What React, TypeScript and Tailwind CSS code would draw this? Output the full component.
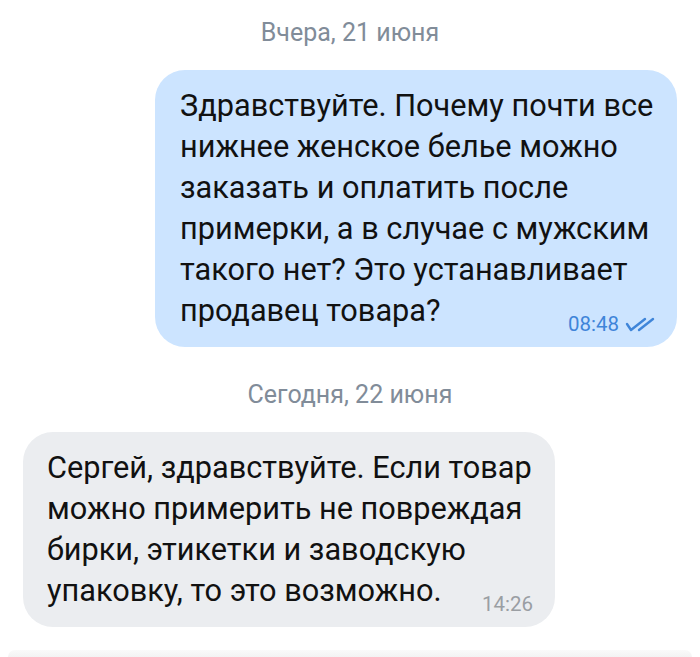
import React from "react";

const font = { fontFamily: "Roboto, 'Noto Sans', sans-serif" };

function DoubleCheck() {
  return (
    <svg width="30" height="16" viewBox="0 0 30 16" fill="none" className="shrink-0">
      <path d="M2 8 L6 14 L20 3" stroke="#3f85d9" strokeWidth="2.4" strokeLinecap="round" strokeLinejoin="round" />
      <path d="M14 14 L28 3" stroke="#3f85d9" strokeWidth="2.4" strokeLinecap="round" strokeLinejoin="round" />
    </svg>
  );
}

export default function App() {
  const outLines = [
    "Здравствуйте. Почему почти все",
    "нижнее женское белье можно",
    "заказать и оплатить после",
    "примерки, а в случае с мужским",
    "такого нет? Это устанавливает",
  ];
  const inLines = [
    "Сергей, здравствуйте. Если товар",
    "можно примерить не повреждая",
    "бирки, этикетки и заводскую",
  ];
  return (
    <div className="w-[700px] h-[657px] bg-white flex flex-col overflow-hidden" style={font}>
      <div className="flex flex-col px-[23px] flex-1">
        <div className="text-center text-[25px] leading-[26px] text-[#818c99] mt-[20px]">Вчера, 21 июня</div>
        <div className="self-end mt-[24px] w-[522px] rounded-[30px] bg-[#cce4ff] pl-[25px] pr-[22px] pt-[15px] pb-[16px] text-[30.7px] leading-[41px] text-[#111]">
          {outLines.map((l) => (
            <div key={l} className="whitespace-nowrap">{l}</div>
          ))}
          <div className="flex items-end justify-between">
            <span className="whitespace-nowrap">продавец товара?</span>
            <span className="flex items-center gap-[6px] text-[20.5px] leading-[20px] text-[#3f85d9] -mb-[3px]">
              08:48
              <DoubleCheck />
            </span>
          </div>
        </div>
        <div className="text-center text-[25px] leading-[26px] text-[#818c99] mt-[35px]">Сегодня, 22 июня</div>
        <div className="self-start mt-[24px] w-[532px] rounded-[30px] bg-[#ebedf0] pl-[24px] pr-[22px] pt-[15px] pb-[16px] text-[30.7px] leading-[41px] text-[#111]">
          {inLines.map((l) => (
            <div key={l} className="whitespace-nowrap">{l}</div>
          ))}
          <div className="flex items-end justify-between">
            <span className="whitespace-nowrap">упаковку, то это возможно.</span>
            <span className="text-[20.5px] leading-[20px] text-[#9a9ea3] -mb-[3px]">14:26</span>
          </div>
        </div>
      </div>
      <div className="mx-[8px] h-[7px] rounded-t-[10px] bg-gradient-to-b from-[#fafafa] to-[#f3f3f3]" />
    </div>
  );
}
